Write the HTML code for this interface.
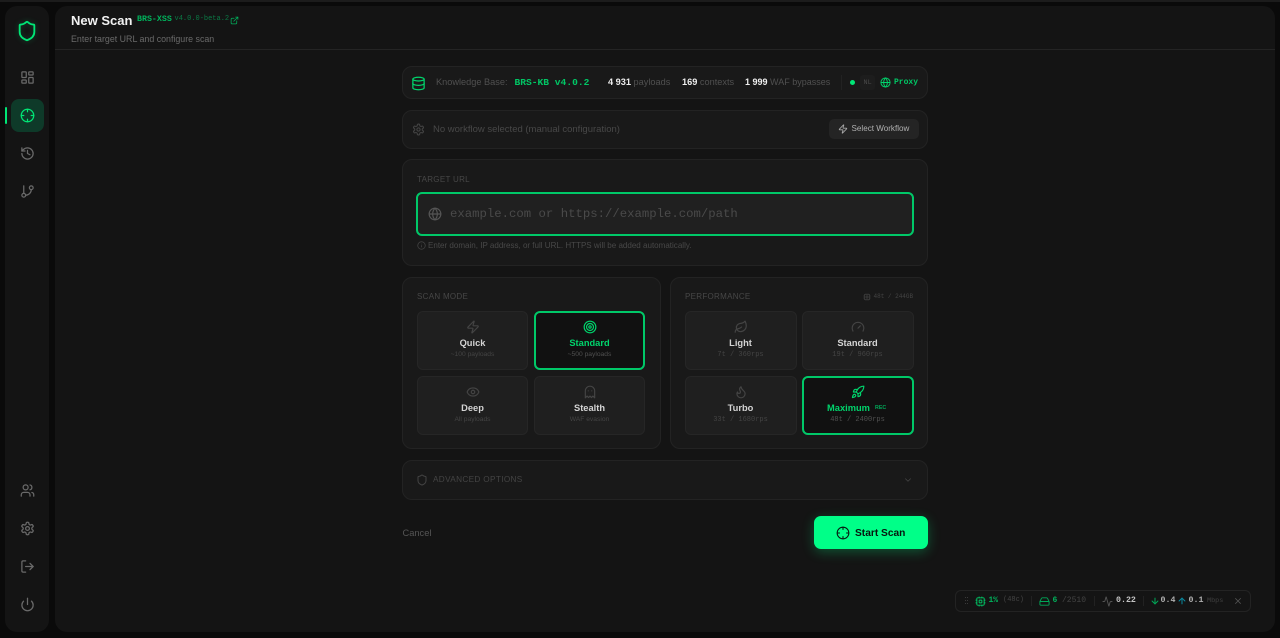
<!DOCTYPE html>
<html><head><meta charset="utf-8"><style>
*{box-sizing:border-box;margin:0;padding:0}
html,body{width:1280px;height:638px;overflow:hidden;background:#0a0a0a;font-family:"Liberation Sans",sans-serif}
body{position:relative}
.a{position:absolute}
.t{position:absolute;white-space:nowrap;line-height:1}
.m{font-family:"Liberation Mono",monospace}
svg{position:absolute;fill:none;stroke-linecap:round;stroke-linejoin:round;stroke-width:2}
.card{position:absolute;background:#191919;border:1px solid #232323;border-radius:10px}
.opt{position:absolute;width:111px;height:59px;background:#1f1f1f;border:1px solid #262626;border-radius:6px}
.sel{background:#111;border:2px solid #00c868}
.n{position:absolute;white-space:nowrap;line-height:1;font-size:9.3px;font-weight:bold;color:#d4d4d4;transform:translateX(-50%)}
.s{position:absolute;white-space:nowrap;line-height:1;font-size:6.7px;color:#444;transform:translateX(-50%)}
.s.m{font-size:7px}
.lab{position:absolute;white-space:nowrap;line-height:1;font-size:8px;letter-spacing:.3px;color:#474747}
.g{stroke:#6a6a6a}.d{stroke:#444}.c{stroke:#00d46c}
</style></head><body>
<svg width="0" height="0" style="display:none">
<symbol id="shield" viewBox="0 0 24 24"><path d="M20 13c0 5-3.500 7.500-7.660 8.950a1 1 0 0 1-.67-.010C7.500 20.500 4 18 4 13V6a1 1 0 0 1 1-1c2 0 4.500-1.200 6.240-2.720a1.170 1.170 0 0 1 1.520 0C14.510 3.810 17 5 19 5a1 1 0 0 1 1 1z"/></symbol>
<symbol id="dash" viewBox="0 0 24 24"><rect x="3" y="3" width="7" height="9" rx="1"/><rect x="14" y="3" width="7" height="5" rx="1"/><rect x="14" y="12" width="7" height="9" rx="1"/><rect x="3" y="16" width="7" height="5" rx="1"/></symbol>
<symbol id="cross" viewBox="0 0 24 24"><circle cx="12" cy="12" r="10"/><path d="M22 12h-4M6 12H2M12 6V2M12 22v-4"/></symbol>
<symbol id="hist" viewBox="0 0 24 24"><path d="M3 12a9 9 0 1 0 9-9 9.750 9.750 0 0 0-6.740 2.740L3 8"/><path d="M3 3v5h5"/><path d="M12 7v5l4 2"/></symbol>
<symbol id="git" viewBox="0 0 24 24"><path d="M6 3v12"/><circle cx="18" cy="6" r="3"/><circle cx="6" cy="18" r="3"/><path d="M18 9a9 9 0 0 1-9 9"/></symbol>
<symbol id="users" viewBox="0 0 24 24"><path d="M16 21v-2a4 4 0 0 0-4-4H6a4 4 0 0 0-4 4v2"/><circle cx="9" cy="7" r="4"/><path d="M22 21v-2a4 4 0 0 0-3-3.870"/><path d="M16 3.130a4 4 0 0 1 0 7.750"/></symbol>
<symbol id="gear" viewBox="0 0 24 24"><path d="M12.220 2h-.44a2 2 0 0 0-2 2v.18a2 2 0 0 1-1 1.730l-.43.250a2 2 0 0 1-2 0l-.15-.08a2 2 0 0 0-2.730.73l-.22.380a2 2 0 0 0 .73 2.730l.15.100a2 2 0 0 1 1 1.720v.510a2 2 0 0 1-1 1.740l-.15.090a2 2 0 0 0-.73 2.730l.22.380a2 2 0 0 0 2.730.73l.15-.08a2 2 0 0 1 2 0l.43.250a2 2 0 0 1 1 1.730V20a2 2 0 0 0 2 2h.44a2 2 0 0 0 2-2v-.18a2 2 0 0 1 1-1.730l.43-.25a2 2 0 0 1 2 0l.15.08a2 2 0 0 0 2.730-.73l.22-.39a2 2 0 0 0-.73-2.730l-.15-.08a2 2 0 0 1-1-1.740v-.5a2 2 0 0 1 1-1.740l.15-.09a2 2 0 0 0 .73-2.730l-.22-.38a2 2 0 0 0-2.730-.73l-.15.08a2 2 0 0 1-2 0l-.43-.25a2 2 0 0 1-1-1.730V4a2 2 0 0 0-2-2z"/><circle cx="12" cy="12" r="3"/></symbol>
<symbol id="out" viewBox="0 0 24 24"><path d="M9 21H5a2 2 0 0 1-2-2V5a2 2 0 0 1 2-2h4"/><path d="m16 17 5-5-5-5"/><path d="M21 12H9"/></symbol>
<symbol id="power" viewBox="0 0 24 24"><path d="M12 2v10"/><path d="M18.400 6.600a9 9 0 1 1-12.770.040"/></symbol>
<symbol id="db" viewBox="0 0 24 24"><ellipse cx="12" cy="5" rx="9" ry="3"/><path d="M3 5V19A9 3 0 0 0 21 19V5"/><path d="M3 12A9 3 0 0 0 21 12"/></symbol>
<symbol id="globe" viewBox="0 0 24 24"><circle cx="12" cy="12" r="10"/><path d="M12 2a14.500 14.500 0 0 0 0 20 14.500 14.500 0 0 0 0-20"/><path d="M2 12h20"/></symbol>
<symbol id="zap" viewBox="0 0 24 24"><path d="M4 14a1 1 0 0 1-.78-1.630l9.900-10.200a.500.500 0 0 1 .860.460l-1.920 6.020A1 1 0 0 0 13 10h7a1 1 0 0 1 .78 1.630l-9.900 10.200a.500.500 0 0 1-.860-.460l1.920-6.020A1 1 0 0 0 11 14z"/></symbol>
<symbol id="target" viewBox="0 0 24 24"><circle cx="12" cy="12" r="10"/><circle cx="12" cy="12" r="6"/><circle cx="12" cy="12" r="2"/></symbol>
<symbol id="eye" viewBox="0 0 24 24"><path d="M2.062 12.348a1 1 0 0 1 0-.696 10.750 10.750 0 0 1 19.876 0 1 1 0 0 1 0 .696 10.750 10.750 0 0 1-19.876 0"/><circle cx="12" cy="12" r="3"/></symbol>
<symbol id="ghost" viewBox="0 0 24 24"><path d="M9 10h.01"/><path d="M15 10h.01"/><path d="M12 2a8 8 0 0 0-8 8v12l3-3 2.500 2.500L12 19l2.500 2.500L17 19l3 3V10a8 8 0 0 0-8-8z"/></symbol>
<symbol id="leaf" viewBox="0 0 24 24"><path d="M11 20A7 7 0 0 1 9.800 6.100C15.500 5 17 4.480 19 2c1 2 2 4.180 2 8 0 5.500-4.780 10-10 10Z"/><path d="M2 21c0-3 1.850-5.360 5.080-6C9.500 14.520 12 13 13 12"/></symbol>
<symbol id="gauge" viewBox="0 0 24 24"><path d="m12 14 4-4"/><path d="M3.340 19a10 10 0 1 1 17.320 0"/></symbol>
<symbol id="flame" viewBox="0 0 24 24"><path d="M8.500 14.500A2.500 2.500 0 0 0 11 12c0-1.380-.5-2-1-3-1.072-2.143-.224-4.054 2-6 .5 2.500 2 4.900 4 6.500 2 1.600 3 3.500 3 5.500a7 7 0 1 1-14 0c0-1.153.433-2.294 1-3a2.500 2.500 0 0 0 2.500 2.500z"/></symbol>
<symbol id="rocket" viewBox="0 0 24 24"><path d="M4.500 16.500c-1.500 1.260-2 5-2 5s3.740-.5 5-2c.71-.84.700-2.130-.090-2.910a2.180 2.180 0 0 0-2.910-.090z"/><path d="m12 15-3-3a22 22 0 0 1 2-3.950A12.880 12.880 0 0 1 22 2c0 2.720-.78 7.500-6 11a22.350 22.350 0 0 1-4 2z"/><path d="M9 12H4s.55-3.030 2-4c1.620-1.080 5 0 5 0"/><path d="M12 15v5s3.030-.55 4-2c1.080-1.620 0-5 0-5"/></symbol>
<symbol id="ext" viewBox="0 0 24 24"><path d="M15 3h6v6"/><path d="M10 14 21 3"/><path d="M18 13v6a2 2 0 0 1-2 2H5a2 2 0 0 1-2-2V8a2 2 0 0 1 2-2h6"/></symbol>
<symbol id="cpu" viewBox="0 0 24 24"><rect x="4" y="4" width="16" height="16" rx="2"/><rect x="9" y="9" width="6" height="6" rx="1"/><path d="M15 2v2M15 20v2M2 15h2M2 9h2M20 15h2M20 9h2M9 2v2M9 20v2"/></symbol>
<symbol id="hdd" viewBox="0 0 24 24"><path d="M22 12H2"/><path d="M5.450 5.110 2 12v6a2 2 0 0 0 2 2h16a2 2 0 0 0 2-2v-6l-3.450-6.890A2 2 0 0 0 16.760 4H7.240a2 2 0 0 0-1.790 1.110z"/></symbol>
<symbol id="act" viewBox="0 0 24 24"><path d="M22 12h-2.480a2 2 0 0 0-1.930 1.460l-2.350 8.360a.250.250 0 0 1-.480 0L9.240 2.180a.250.250 0 0 0-.480 0l-2.350 8.360A2 2 0 0 1 4.480 12H2"/></symbol>
<symbol id="info" viewBox="0 0 24 24"><circle cx="12" cy="12" r="10"/><path d="M12 16v-4M12 8h.01"/></symbol>
<symbol id="down" viewBox="0 0 24 24"><path d="M12 5v14"/><path d="m19 12-7 7-7-7"/></symbol>
<symbol id="up" viewBox="0 0 24 24"><path d="M12 19V5"/><path d="m5 12 7-7 7 7"/></symbol>
<symbol id="x" viewBox="0 0 24 24"><path d="M18 6 6 18"/><path d="m6 6 12 12"/></symbol>
<symbol id="chev" viewBox="0 0 24 24"><path d="m6 9 6 6 6-6"/></symbol>
</svg>

<div class="a" style="left:0;top:0;width:1280px;height:2px;background:#1c1c1c"></div>
<div class="a" style="left:5px;top:6px;width:44px;height:626px;background:#141414;border-radius:12px"></div>
<div class="a" style="left:55px;top:6px;width:1220px;height:626px;background:#141414;border-radius:12px"></div>
<div class="a" style="left:55px;top:49px;width:1220px;height:1px;background:#242424"></div>

<!-- sidebar -->
<svg style="left:16px;top:20px;stroke:#00e676;filter:drop-shadow(0 0 3px rgba(0,230,118,.3))" width="22" height="22"><use href="#shield"/></svg>
<svg class="g" style="left:20px;top:70px" width="15" height="15"><use href="#dash"/></svg>
<div class="a" style="left:11px;top:99px;width:33px;height:33px;background:#0e3a29;border-radius:8px"></div>
<div class="a" style="left:5px;top:107px;width:2px;height:17px;background:#00e676;border-radius:1px"></div>
<svg style="left:20px;top:108px;stroke:#00e676" width="15" height="15"><use href="#cross"/></svg>
<svg class="g" style="left:20px;top:146px" width="15" height="15"><use href="#hist"/></svg>
<svg class="g" style="left:20px;top:184px" width="15" height="15"><use href="#git"/></svg>
<svg class="g" style="left:20px;top:483px" width="15" height="15"><use href="#users"/></svg>
<svg class="g" style="left:20px;top:521px" width="15" height="15"><use href="#gear"/></svg>
<svg class="g" style="left:20px;top:559px" width="15" height="15"><use href="#out"/></svg>
<svg class="g" style="left:20px;top:597px" width="15" height="15"><use href="#power"/></svg>

<!-- header -->
<div class="t" style="left:71px;top:14px;font-size:13px;font-weight:bold;color:#f2f2f2">New Scan</div>
<div class="t m" style="left:137px;top:15.500px;font-size:8.300px;font-weight:bold;color:#00b35c">BRS-XSS</div>
<div class="t m" style="left:174.500px;top:16px;font-size:7px;color:#0b7a46">v4.0.0-beta.2</div>
<svg style="left:230px;top:15.500px;stroke:#00b35c" width="9" height="9"><use href="#ext"/></svg>
<div class="t" style="left:71px;top:34.500px;font-size:8.850px;color:#6a6a6a">Enter target URL and configure scan</div>

<!-- KB card -->
<div class="card" style="left:402px;top:66px;width:526px;height:33px"></div>
<svg class="c" style="left:410.500px;top:75.500px" width="15" height="15"><use href="#db"/></svg>
<div class="t" style="left:436px;top:78px;font-size:9.200px;color:#505050">Knowledge Base:</div>
<div class="t m" style="left:514.500px;top:77.500px;font-size:9.600px;font-weight:bold;color:#00c765">BRS-KB v4.0.2</div>
<div class="t" style="left:608px;top:78px;font-size:9.200px;color:#505050"><b style="color:#eee">4 931</b> payloads</div>
<div class="t" style="left:682px;top:78px;font-size:9.200px;color:#505050"><b style="color:#eee">169</b> contexts</div>
<div class="t" style="left:745px;top:78px;font-size:9px;color:#505050"><b style="color:#eee">1 999</b> WAF bypasses</div>
<div class="a" style="left:841px;top:75px;width:1px;height:15px;background:#222"></div>
<div class="a" style="left:850px;top:80px;width:5px;height:5px;border-radius:50%;background:#00e676"></div>
<div class="a" style="left:860px;top:75px;width:15px;height:15px;background:#1d1d1d;border-radius:3px"></div>
<div class="t m" style="left:863.500px;top:79.500px;font-size:6.800px;color:#4a4a4a">NL</div>
<svg class="c" style="left:879.500px;top:77px" width="11" height="11"><use href="#globe"/></svg>
<div class="t m" style="left:894px;top:78.500px;font-size:8px;font-weight:bold;color:#00c765">Proxy</div>

<!-- workflow card -->
<div class="card" style="left:402px;top:110px;width:526px;height:39px"></div>
<svg class="d" style="left:411.500px;top:122.500px" width="13" height="13"><use href="#gear"/></svg>
<div class="t" style="left:433px;top:125px;font-size:9.500px;color:#484848">No workflow selected (manual configuration)</div>
<div class="a" style="left:829px;top:119px;width:90px;height:20px;background:#242424;border-radius:5px"></div>
<svg style="left:837.500px;top:124px;stroke:#aaa" width="10" height="10"><use href="#zap"/></svg>
<div class="t" style="left:851.500px;top:125px;font-size:8.100px;color:#b0b0b0">Select Workflow</div>

<!-- target -->
<div class="card" style="left:402px;top:159px;width:526px;height:107px"></div>
<div class="lab" style="left:417px;top:175.500px">TARGET URL</div>
<div class="a" style="left:416px;top:192px;width:498px;height:44px;background:#202020;border:2px solid #00c868;border-radius:6px"></div>
<svg style="left:428px;top:207px;stroke:#555" width="14" height="14"><use href="#globe"/></svg>
<div class="t m" style="left:450px;top:208px;font-size:12.300px;color:#4a4a4a">example.com or https://example.com/path</div>
<svg class="d" style="left:417px;top:241px" width="9" height="9"><use href="#info"/></svg>
<div class="t" style="left:428px;top:242px;font-size:8.040px;color:#484848">Enter domain, IP address, or full URL. HTTPS will be added automatically.</div>

<!-- scan mode -->
<div class="card" style="left:402px;top:277px;width:259px;height:172px"></div>
<div class="lab" style="left:417px;top:293px">SCAN MODE</div>
<div class="opt" style="left:417px;top:311px"></div>
<div class="opt sel" style="left:534px;top:311px"></div>
<div class="opt" style="left:417px;top:376px"></div>
<div class="opt" style="left:534px;top:376px"></div>
<svg class="d" style="left:465.500px;top:320px" width="14" height="14"><use href="#zap"/></svg>
<svg class="c" style="left:582.500px;top:319.500px" width="14" height="14"><use href="#target"/></svg>
<svg class="d" style="left:465.500px;top:385px" width="14" height="14"><use href="#eye"/></svg>
<svg class="d" style="left:582.500px;top:385px" width="14" height="14"><use href="#ghost"/></svg>
<div class="n" style="left:472.500px;top:339px">Quick</div>
<div class="s" style="left:472.500px;top:352px">~100 payloads</div>
<div class="n" style="left:589.500px;top:339px;color:#00d46c">Standard</div>
<div class="s" style="left:589.500px;top:352px;color:#505050">~500 payloads</div>
<div class="n" style="left:472.500px;top:404px">Deep</div>
<div class="s" style="left:472.500px;top:417px">All payloads</div>
<div class="n" style="left:589.500px;top:404px">Stealth</div>
<div class="s" style="left:589.500px;top:417px">WAF evasion</div>

<!-- performance -->
<div class="card" style="left:670px;top:277px;width:258px;height:172px"></div>
<div class="lab" style="left:685px;top:293px">PERFORMANCE</div>
<svg class="d" style="left:862.500px;top:292.500px" width="8" height="8"><use href="#cpu"/></svg>
<div class="t m" style="left:873.500px;top:293.500px;font-size:6px;color:#444">48t / 244GB</div>
<div class="opt" style="left:685px;top:311px;width:112px"></div>
<div class="opt" style="left:802px;top:311px;width:112px"></div>
<div class="opt" style="left:685px;top:376px;width:112px"></div>
<div class="opt sel" style="left:802px;top:376px;width:112px"></div>
<svg class="d" style="left:733.500px;top:320px" width="14" height="14"><use href="#leaf"/></svg>
<svg class="d" style="left:850.500px;top:320px" width="14" height="14"><use href="#gauge"/></svg>
<svg class="d" style="left:733.500px;top:385px" width="14" height="14"><use href="#flame"/></svg>
<svg class="c" style="left:850.500px;top:385px" width="14" height="14"><use href="#rocket"/></svg>
<div class="n" style="left:740.500px;top:339px">Light</div>
<div class="s m" style="left:740.500px;top:352px">7t / 360rps</div>
<div class="n" style="left:857.500px;top:339px">Standard</div>
<div class="s m" style="left:857.500px;top:352px">19t / 960rps</div>
<div class="n" style="left:740.500px;top:404px">Turbo</div>
<div class="s m" style="left:740.500px;top:417px">33t / 1680rps</div>
<div class="n" style="left:848.500px;top:404px;color:#00d46c">Maximum</div>
<div class="t" style="left:875px;top:405.500px;font-size:5.300px;font-weight:bold;color:#00a858">REC</div>
<div class="s m" style="left:857.500px;top:417px;color:#505050">48t / 2400rps</div>

<!-- advanced -->
<div class="card" style="left:402px;top:460px;width:526px;height:40px"></div>
<svg class="d" style="left:416px;top:474px" width="12" height="12"><use href="#shield"/></svg>
<div class="t" style="left:433px;top:476px;font-size:8.200px;letter-spacing:.35px;color:#444">ADVANCED OPTIONS</div>
<svg class="d" style="left:903px;top:475px" width="10" height="10"><use href="#chev"/></svg>

<!-- actions -->
<div class="t" style="left:402.500px;top:529px;font-size:9.300px;color:#555">Cancel</div>
<div class="a" style="left:814px;top:516px;width:114px;height:33px;background:#00ff88;border-radius:7px;box-shadow:0 3px 12px rgba(0,255,136,.28)"></div>
<svg style="left:836px;top:526px;stroke:#07140e;stroke-width:1.800" width="14" height="14"><use href="#cross"/></svg>
<div class="t" style="left:855px;top:528.500px;font-size:10.200px;font-weight:bold;color:#07140e">Start Scan</div>

<!-- status bar -->
<div class="a" style="left:955px;top:590px;width:296px;height:22px;background:#141414;border:1px solid #232323;border-radius:6px"></div>
<div class="a" style="left:965px;top:597px;width:1px;height:1px;background:#3a3a3a;box-shadow:2px 0 #3a3a3a,0 3px #3a3a3a,2px 3px #3a3a3a,0 6px #3a3a3a,2px 6px #3a3a3a"></div>
<svg style="left:974.500px;top:595.500px;stroke:#00c765" width="11" height="11"><use href="#cpu"/></svg>
<div class="t m" style="left:988.500px;top:597px;font-size:8px;font-weight:bold;color:#00b35c">1%</div>
<div class="t m" style="left:1003px;top:597px;font-size:7px;color:#444">(48c)</div>
<div class="a" style="left:1031px;top:596px;width:1px;height:10px;background:#222"></div>
<svg style="left:1038.500px;top:595.500px;stroke:#00a858" width="11" height="11"><use href="#hdd"/></svg>
<div class="t m" style="left:1052.500px;top:597px;font-size:8px;font-weight:bold;color:#00b35c">6</div>
<div class="t m" style="left:1062px;top:597px;font-size:8px;color:#444">/2510</div>
<div class="a" style="left:1094px;top:596px;width:1px;height:10px;background:#222"></div>
<svg style="left:1101.500px;top:595.500px;stroke:#555" width="11" height="11"><use href="#act"/></svg>
<div class="t m" style="left:1116px;top:597px;font-size:8.300px;font-weight:bold;color:#c4c4c4">0.22</div>
<div class="a" style="left:1143px;top:596px;width:1px;height:10px;background:#222"></div>
<svg style="left:1149.500px;top:596px;stroke:#00a858;stroke-width:2.400" width="10" height="10"><use href="#down"/></svg>
<div class="t m" style="left:1160.500px;top:597px;font-size:8.300px;font-weight:bold;color:#b0b0b0">0.4</div>
<svg style="left:1176.500px;top:596px;stroke:#0a8aa0;stroke-width:2.400" width="10" height="10"><use href="#up"/></svg>
<div class="t m" style="left:1188.500px;top:597px;font-size:8.300px;font-weight:bold;color:#b0b0b0">0.1</div>
<div class="t m" style="left:1207px;top:597.500px;font-size:6.800px;color:#404040">Mbps</div>
<svg style="left:1233px;top:596px;stroke:#555" width="10" height="10"><use href="#x"/></svg>
</body></html>
